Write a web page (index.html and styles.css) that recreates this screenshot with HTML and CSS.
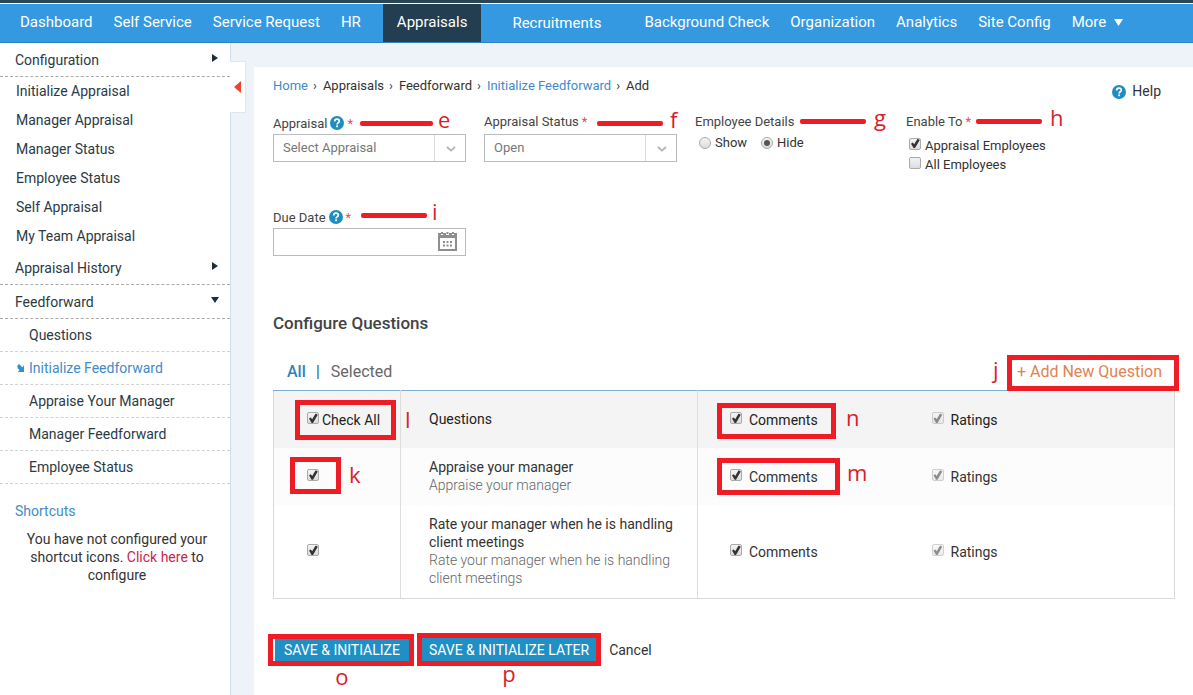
FILE: index.html
```html
<!DOCTYPE html>
<html lang="en">
<head>
<meta charset="utf-8">
<title>Initialize Feedforward - Add</title>
<link rel="stylesheet" href="styles.css">
</head>
<body>
<svg class="sprite" aria-hidden="true">
  <symbol id="help" viewBox="0 0 14 14"><circle cx="7" cy="7" r="7" fill="#1f8dc0"/><path d="M4.7 5.5C4.7 4 5.6 3.2 7 3.2s2.3.8 2.3 2c0 1.6-2.2 1.6-2.2 3.3" fill="none" stroke="#fff" stroke-width="1.7"/><rect x="6.2" y="9.4" width="1.8" height="1.8" fill="#fff"/></symbol>
  <symbol id="chevron" viewBox="0 0 10 6"><path d="M1 1l4 3.6L9 1" fill="none" stroke="#b4b4b4" stroke-width="1.8"/></symbol>
</svg>
<nav class="topbar">
  <a href="#">Dashboard</a>
  <a href="#">Self Service</a>
  <a href="#">Service Request</a>
  <a href="#">HR</a>
  <a href="#" class="active">Appraisals</a>
  <a href="#" class="wide">Recruitments</a>
  <a href="#">Background Check</a>
  <a href="#">Organization</a>
  <a href="#">Analytics</a>
  <a href="#">Site Config</a>
  <a href="#">More <svg class="caret" viewBox="0 0 9 7"><path d="M0 0h9L4.500 7z" fill="#fff"/></svg></a>
</nav>
<div class="shell">
  <aside class="sidebar">
    <a href="#" class="group">Configuration <svg class="arrow" viewBox="0 0 8 8"><path d="M1 0l6 4-6 4z"/></svg></a>
    <div class="links">
      <a href="#">Initialize Appraisal</a>
      <a href="#">Manager Appraisal</a>
      <a href="#">Manager Status</a>
      <a href="#">Employee Status</a>
      <a href="#">Self Appraisal</a>
      <a href="#">My Team Appraisal</a>
    </div>
    <a href="#" class="group">Appraisal History <svg class="arrow" viewBox="0 0 8 8"><path d="M1 0l6 4-6 4z"/></svg></a>
    <a href="#" class="group">Feedforward <svg class="arrow" viewBox="0 0 8 8"><path d="M0 1h8L4 7z"/></svg></a>
    <div class="sub">
      <a href="#">Questions</a>
      <a href="#" class="current"><svg class="pointer" viewBox="0 0 8 8"><path d="M0 2L2 0l3.200 3.200L7 1.500V8H.8l1.700-1.900L0 3.800l1.100-.4z" fill="#2d93cf"/></svg>Initialize Feedforward</a>
      <a href="#">Appraise Your Manager</a>
      <a href="#">Manager Feedforward</a>
      <a href="#">Employee Status</a>
    </div>
    <h2 class="shortcuts">Shortcuts</h2>
    <p class="note">You have not configured your shortcut icons. <a href="#">Click here</a> to configure</p>
    <button type="button" class="collapse" aria-label="Collapse menu"><svg viewBox="0 0 7 12"><path d="M7 0v12L0 6z" fill="#e8452f"/></svg></button>
  </aside>
  <main class="panel">
    <header class="head">
      <nav class="crumbs">
        <a href="#">Home</a><i>›</i><span>Appraisals</span><i>›</i><span>Feedforward</span><i>›</i><a href="#">Initialize Feedforward</a><i>›</i><span>Add</span>
      </nav>
      <a href="#" class="help"><svg><use href="#help"/></svg>Help</a>
    </header>
    <form>
      <div class="fields">
        <div class="field">
          <div class="label low"><label for="appraisal">Appraisal</label><svg><use href="#help"/></svg><b>*</b></div>
          <div class="pick"><select id="appraisal"><option>Select Appraisal</option></select><svg><use href="#chevron"/></svg></div>
          <span class="callout at-e">e</span>
        </div>
        <div class="field">
          <div class="label"><label for="status">Appraisal Status</label><b>*</b></div>
          <div class="pick"><select id="status"><option>Open</option></select><svg><use href="#chevron"/></svg></div>
          <span class="callout at-f">f</span>
        </div>
        <fieldset class="field">
          <legend class="label">Employee Details<span class="callout at-g">g</span></legend>
          <div class="radios">
            <label><input type="radio" name="details">Show</label>
            <label><input type="radio" name="details" checked>Hide</label>
          </div>
        </fieldset>
        <fieldset class="field">
          <legend class="label">Enable To<b>*</b><span class="callout at-h">h</span></legend>
          <div class="ticks">
            <label><input type="checkbox" checked>Appraisal Employees</label>
            <label><input type="checkbox">All Employees</label>
          </div>
        </fieldset>
        <div class="field">
          <div class="label low"><label for="due">Due Date</label><svg><use href="#help"/></svg><b>*</b></div>
          <div class="date"><input type="text" id="due"><svg viewBox="0 0 19 19"><path d="M1 4V18h17V4z" fill="#fff" stroke="#8f8f8f" stroke-width="2"/><path d="M0 1h3v2h2V1h3v2h3V1h3v2h2V1h3v5H0z" fill="#8f8f8f"/><path d="M3 0h2v2H3zM8.500 0h2v2h-2zM14 0h2v2h-2z" fill="#8f8f8f"/><path d="M5 9h2v2H5zM8.500 9h2v2h-2zM12 9h2v2h-2zM5 12.500h2v2H5zM8.500 12.500h2v2h-2zM12 12.500h2v2h-2z" fill="#8f8f8f"/></svg></div>
          <span class="callout at-i">i</span>
        </div>
      </div>
      <h1>Configure Questions</h1>
      <div class="tabs">
        <a href="#" class="on">All</a><span class="bar"></span><a href="#">Selected</a>
        <span class="add boxed"><button type="button">+ Add New Question</button><span class="letter at-j">j</span></span>
      </div>
      <table>
        <colgroup><col class="c1"><col class="c2"><col class="c3"><col></colgroup>
        <thead>
          <tr>
            <th><label class="boxed box-l"><input type="checkbox" checked>Check All<span class="letter at-l">l</span></label></th>
            <th>Questions</th>
            <th><label class="opt boxed box-n"><input type="checkbox" checked>Comments<span class="letter at-n">n</span></label></th>
            <th><label class="opt"><input type="checkbox" checked disabled>Ratings</label></th>
          </tr>
        </thead>
        <tbody>
          <tr class="alt">
            <td><span class="boxed box-k"><input type="checkbox" checked aria-label="Appraise your manager"><span class="letter at-k">k</span></span></td>
            <td><p>Appraise your manager</p><p class="desc">Appraise your manager</p></td>
            <td><label class="opt boxed box-m"><input type="checkbox" checked>Comments<span class="letter at-m">m</span></label></td>
            <td><label class="opt"><input type="checkbox" checked disabled>Ratings</label></td>
          </tr>
          <tr>
            <td><span class="boxless"><input type="checkbox" checked aria-label="Rate your manager"></span></td>
            <td><p>Rate your manager when he is handling client meetings</p><p class="desc">Rate your manager when he is handling client meetings</p></td>
            <td><label class="opt"><input type="checkbox" checked>Comments</label></td>
            <td><label class="opt"><input type="checkbox" checked disabled>Ratings</label></td>
          </tr>
        </tbody>
      </table>
      <div class="actions">
        <span class="boxed box-o"><button type="submit">SAVE &amp; INITIALIZE</button><span class="letter under">o</span></span>
        <span class="boxed box-p"><button type="button">SAVE &amp; INITIALIZE LATER</button><span class="letter under">p</span></span>
        <a href="#">Cancel</a>
      </div>
    </form>
  </main>
</div>
</body>
</html>
```
FILE: styles.css
```css
* { box-sizing: border-box; }
body { margin: 0; min-height: 100vh; display: flex; flex-direction: column; background: #edf3f8; color: #333; font: 14px/18px Roboto, "Liberation Sans", sans-serif; }
a { color: inherit; text-decoration: none; }
p, h1, h2 { margin: 0; font-weight: 400; }
.sprite { position: absolute; width: 0; height: 0; }

.topbar { display: flex; height: 43px; padding-left: 9px; border-top: 3px solid #2c4555; border-bottom: 1px solid #2c83c0; background: #3499e0; box-shadow: inset 0 1px #fff; color: #fff; font-size: 15px; white-space: nowrap; }
.topbar a { display: flex; align-items: center; gap: 8px; padding: 0 10px 1px 11px; }
.topbar .active { margin: 1px 20px 0 12px; padding: 0 14px 2px; background: #233e50; }
.topbar .wide { margin-right: 22px; padding-top: 1px; padding-bottom: 0; }
.caret { width: 9px; height: 7px; }

.shell { flex: 1; display: flex; }
.sidebar { position: relative; flex: 0 0 231px; border-right: 1px solid #d5dfe6; background: #fff; color: #2b3a44; }
.group { display: flex; align-items: center; justify-content: space-between; height: 34px; padding: 0 11px 0 15px; border-bottom: 1px dashed #aaa; }
.arrow { width: 8px; height: 8px; margin-bottom: 4px; fill: #1f2f3a; }
.links a { display: block; padding: 5px 0 6px 16px; }
.sub a { position: relative; display: block; padding: 7px 0 7px 29px; border-bottom: 1px dashed #d2d2d2; }
.sub .current { color: #428bca; }
.pointer { position: absolute; left: 17px; top: 12px; width: 8px; height: 8px; }
.shortcuts { padding: 18px 15px 0; color: #428bca; font-size: 14px; line-height: 18px; }
.note { padding: 10px 20px 0 24px; text-align: center; color: #333; }
.note a { color: #c7254e; }
.collapse { position: absolute; left: 230px; top: 18px; display: flex; align-items: center; width: 16px; height: 52px; padding: 0 0 0 4px; border: 1px solid #dfe7ec; border-left: 0; background: #fff; }
.collapse svg { width: 7px; height: 12px; }

.panel { flex: 1; margin: 24px 0 0 23px; padding: 10px 18px 0 19px; background: #fff; }
.head { display: flex; justify-content: space-between; }
.crumbs { display: flex; font-size: 13px; }
.crumbs a { color: #428bca; }
.crumbs i { margin: 0 6px 0 5px; font-style: normal; }
.help { display: flex; align-items: center; gap: 6px; padding: 5px 14px 0 0; }
.help svg { width: 14px; height: 14px; margin-top: 2px; }

.fields { display: grid; grid-template-columns: repeat(4, 193px); gap: 20px 18px; font-size: 13px; }
.field { position: relative; margin: 0; padding: 0; border: 0; min-width: 0; }
.label { display: flex; align-items: center; gap: 3px; height: 34px; padding: 10px 0 0; font-size: 13px; color: #444; }
legend { position: relative; }
.field .low { padding-top: 14px; }
.label svg { width: 14px; height: 14px; margin-bottom: 2px; }
.label b { color: #d9534f; font-weight: 400; }
.pick, .date { position: relative; }
.pick select, .date input { display: block; width: 100%; height: 28px; padding: 0 9px; border: 1px solid #bbb; border-radius: 0; background: #fff; color: #777; font: 13px/18px Roboto, sans-serif; appearance: none; }
.pick::after { content: ""; position: absolute; top: 1px; bottom: 1px; right: 31px; width: 1px; background: #ddd; }
.pick svg { position: absolute; right: 10px; top: 12px; width: 10px; height: 6px; }
.date svg { position: absolute; right: 9px; top: 4px; width: 19px; height: 19px; }

input[type="checkbox"], input[type="radio"] { position: relative; flex: none; appearance: none; width: 12px; height: 12px; margin: 0; border: 1px solid #aaa; border-radius: 2px; background: linear-gradient(#f4f4f4, #dcdcdc); }
input[type="radio"] { border-radius: 50%; }
input[type="checkbox"]:checked::before { content: ""; position: absolute; inset: 0; background: #333; clip-path: polygon(10% 52%, 28% 40%, 42% 58%, 76% 2%, 98% 14%, 50% 96%, 36% 96%); }
input[type="radio"]:checked::before { content: ""; position: absolute; inset: 2px; border-radius: 50%; background: #555; }
input:disabled { opacity: .55; }
.radios { display: flex; gap: 14px; padding-left: 4px; }
.radios label, .ticks label { display: flex; align-items: center; gap: 4px; }
.ticks { padding: 2px 0 0 3px; }
.ticks label { height: 19px; }
.ticks input { margin-bottom: 4px; }

.callout, .letter { color: #d81e2c; font: 22px/24px "Open Sans", "Noto Sans", sans-serif; }
.callout { position: absolute; top: 7px; display: flex; align-items: center; gap: 5px; }
.callout::before { content: ""; width: 66px; height: 5px; margin-top: 8px; border-radius: 2px; background: #ee1c25; }
.at-e::before { width: 73px; }
.at-e { left: 87px; }
.at-f { left: 113px; gap: 7px; }
.at-g { left: 105px; top: 5px; gap: 8px; }
.at-h { left: 70px; top: 5px; gap: 8px; }
.at-i { left: 88px; top: 5px; }
.letter { position: absolute; }
.boxed { position: relative; }
.boxed::after { content: ""; position: absolute; border: 5px solid #ee1c25; pointer-events: none; }

h1 { padding: 56px 0 20px; color: #444; font-size: 17px; font-weight: 500; line-height: 22px; }
.tabs { display: flex; align-items: center; height: 36px; padding: 0 0 0 14px; font-size: 16px; color: #666; }
.tabs .on { color: #2d83ba; font-weight: 500; }
.bar { width: 2px; height: 14px; margin: 0 12px 0 11px; background: #5fa9cc; }
.add { margin-left: auto; padding-right: 13px; }
.add::after { inset: -6px -4px -8px -10px; }
.add button { display: block; padding: 0; border: 0; background: none; color: #e08352; font: 16px/22px Roboto, sans-serif; }
.at-j { left: -24px; top: -4px; }

table { width: 100%; table-layout: fixed; border-collapse: collapse; border: 1px solid #d9d9d9; border-top: 1px solid #7fb0d0; }
.c1 { width: 127px; }
.c2 { width: 297px; }
.c3 { width: 202px; }
th, td { padding: 10px 12px 10px 28px; text-align: left; font-weight: 400; vertical-align: middle; }
th { height: 57px; background: #f4f4f4; color: #222; }
th:nth-child(-n+2), td:nth-child(-n+2) { border-right: 1px solid #ddd; }
tr > :nth-child(1) { padding-left: 33px; padding-right: 0; }
tr > :nth-child(n+3) { padding-left: 32px; }
.alt td { height: 57px; background: #fcfcfc; }
tbody tr:last-child td { height: 94px; }
.desc { color: #666; font-weight: 300; }
th label, td label, .box-k, .boxless { display: inline-flex; align-items: center; gap: 3px; vertical-align: middle; }
.box-k, .boxless { margin-bottom: 4px; }
th .opt, td .opt { gap: 7px; }
.opt input, .box-l input { margin-bottom: 3px; }
.box-l::after { inset: -11px -16px -11px -12px; }
.at-l { left: 98px; top: -4px; }
.box-n::after { inset: -8px -18px -10px -13px; }
.at-n { left: 116px; top: -6px; }
.box-m::after { inset: -10px -22px -9px -13px; }
.at-m { left: 117px; top: -8px; }
.box-k::after { inset: -12px -22px -13px -17px; }
.at-k { left: 42px; top: -7px; }

.actions { display: flex; align-items: center; gap: 13px; padding: 39px 0 0 2px; }
.actions button { display: block; height: 24px; padding: 0 9px; border: 0; background: #1f8fc4; color: #fff; font: 14px/24px Roboto, sans-serif; }
.actions .box-p button { padding: 0 7px; }
.box-o::after { inset: -4px -5px -4px -7px; }
.box-p::after { inset: -5px -5px -4px -5px; }
.under { left: 0; right: 0; top: 26px; text-align: center; }
.box-p .under { top: 23px; }
```
